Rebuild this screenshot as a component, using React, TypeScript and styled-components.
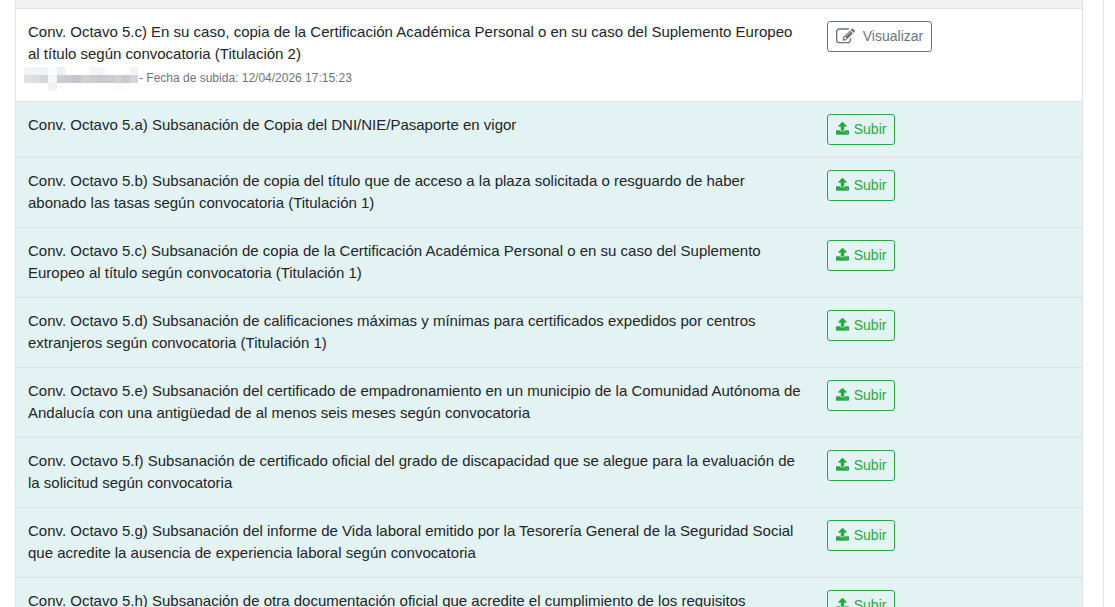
import React from "react";
import styled, { createGlobalStyle } from "styled-components";

const GlobalStyle = createGlobalStyle`
  *, *::before, *::after { box-sizing: border-box; }
  body {
    margin: 0;
    overflow: hidden;
    background: #fff;
    color: #212529;
    font-family: "Liberation Sans", Arial, sans-serif;
    font-size: 15px;
    line-height: 1.5;
  }
`;

const Viewport = styled.main`
  height: 100vh;
  overflow: hidden;
`;

const Panel = styled.section`
  margin-right: 11px;
  padding: 0 20px 0 15px;
  border-right: 1px solid #dee2e6;
`;

const Table = styled.table`
  width: 100%;
  table-layout: fixed;
  border-collapse: collapse;
  border: solid #dee2e6;
  border-width: 0 1px;
`;

const HeadCell = styled.th<{ $width: string }>`
  width: ${(p) => p.$width};
  height: 8px;
  padding: 0;
  background: #f2f2f2;
`;

const Row = styled.tr<{ $pending?: boolean }>`
  background: ${(p) => (p.$pending ? "#e3f3f3" : "#fff")};
`;

const Cell = styled.td`
  padding: 12px;
  border-top: 1px solid #dee2e6;
  vertical-align: top;
`;

const ActionCell = styled(Cell)`
  padding-left: 11px;
`;

const Meta = styled.div`
  display: flex;
  height: 23px;
  color: #6c757d;
  font-size: 12px;
  line-height: 24px;
  white-space: pre;
`;

const Redacted = styled.svg`
  flex: none;
  width: 114px;
  height: 24px;
  margin: 1px 1px 0 -4px;
`;

const Button = styled.button<{ $color: string; $gap: number }>`
  display: flex;
  align-items: center;
  gap: ${(p) => p.$gap}px;
  padding: 4px 8px;
  border: 1px solid ${(p) => p.$color};
  border-radius: 3px;
  background: transparent;
  color: ${(p) => p.$color};
  font-family: inherit;
  font-size: 14px;
  line-height: 21px;
  cursor: pointer;
`;

const Icon = styled.svg<{ $w: number; $h: number }>`
  flex: none;
  width: ${(p) => p.$w}px;
  height: ${(p) => p.$h}px;
  fill: currentColor;
`;

const UploadIcon = () => (
  <Icon $w={13} $h={14} viewBox="64 64 1664 1792" stroke="currentColor" strokeWidth={50} aria-hidden="true">
    <path d="M1344 1472q0-26-19-45t-45-19-45 19-19 45 19 45 45 19 45-19 19-45zm256 0q0-26-19-45t-45-19-45 19-19 45 19 45 45 19 45-19 19-45zm128-224v320q0 40-28 68t-68 28h-1472q-40 0-68-28t-28-68v-320q0-40 28-68t68-28h427q21 56 70.500 92t110.500 36h256q61 0 110.500-36t70.500-92h427q40 0 68 28t28 68zm-325-648q-17 40-59 40h-256v448q0 26-19 45t-45 19h-256q-26 0-45-19t-19-45v-448h-256q-42 0-59-40-17-39 14-69l448-448q18-19 45-19t45 19l448 448q31 30 14 69z" />
  </Icon>
);

const EditIcon = () => (
  <Icon $w={19} $h={19} viewBox="0 0 1792 1792" aria-hidden="true">
    <path d="M888 1184l116-116-152-152-116 116v56h96v96h56zm440-720q-16-16-33 1l-350 350q-17 17-1 33t33-1l350-350q17-17 1-33zm80 594v190q0 119-84.500 203.500t-203.500 84.500h-832q-119 0-203.500-84.500t-84.500-203.500v-832q0-119 84.500-203.500t203.500-84.500h832q63 0 117 25 15 7 18 23 3 17-9 29l-49 49q-14 14-32 8-23-6-45-6h-832q-66 0-113 47t-47 113v832q0 66 47 113t113 47h832q66 0 113-47t47-113v-126q0-13 9-22l64-64q15-15 35-7t20 29zm-96-738l288 288-672 672h-288v-288zm444 132l-92 92-288-288 92-92q28-28 68-28t68 28l152 152q28 28 28 68t-28 68z" />
  </Icon>
);

// Colours of the pixelated file name, one list per band of 8px blocks.
const mosaic = [
  ["#f3f3f4", "#f1f2f3", "#f1f2f3", "#fafcff", "#eeeff1", "#fff", "#fff", "#fff", "#f5f5f6", "#f4f4f6", "#fff", "#fff", "#fefefe", "#f2f3f5"],
  ["#dfe0e0", "#dcddde", "#d6d7da", "#f2f7fc", "#caced1", "#c8cbcd", "#c1c6ce", "#cfd1d3", "#cacccd", "#c6cacd", "#c9cbcd", "#cdd0d8", "#c6cacf", "#cfd4dd"],
  ["#fff", "#fff", "#fff", "#f1f1f3", "#fcfcfd", "#fff", "#fff", "#fff", "#fff", "#fff", "#fff", "#fafafc", "#fdfdfd", "#fff"],
];

const FileName = () => (
  <Redacted viewBox="0 0 112 24" preserveAspectRatio="none" shapeRendering="crispEdges" aria-hidden="true">
    {mosaic.map((band, y) =>
      band.map((fill, x) => (
        <rect key={`${x}-${y}`} x={x * 8} y={y * 8} width={8} height={8} fill={fill} />
      ))
    )}
  </Redacted>
);

const pending = [
  "Conv. Octavo 5.a) Subsanación de Copia del DNI/NIE/Pasaporte en vigor",
  "Conv. Octavo 5.b) Subsanación de copia del título que de acceso a la plaza solicitada o resguardo de haber abonado las tasas según convocatoria (Titulación 1)",
  "Conv. Octavo 5.c) Subsanación de copia de la Certificación Académica Personal o en su caso del Suplemento Europeo al título según convocatoria (Titulación 1)",
  "Conv. Octavo 5.d) Subsanación de calificaciones máximas y mínimas para certificados expedidos por centros extranjeros según convocatoria (Titulación 1)",
  "Conv. Octavo 5.e) Subsanación del certificado de empadronamiento en un municipio de la Comunidad Autónoma de Andalucía con una antigüedad de al menos seis meses según convocatoria",
  "Conv. Octavo 5.f) Subsanación de certificado oficial del grado de discapacidad que se alegue para la evaluación de la solicitud según convocatoria",
  "Conv. Octavo 5.g) Subsanación del informe de Vida laboral emitido por la Tesorería General de la Seguridad Social que acredite la ausencia de experiencia laboral según convocatoria",
  "Conv. Octavo 5.h) Subsanación de otra documentación oficial que acredite el cumplimiento de los requisitos",
];

export default function App() {
  return (
    <>
      <GlobalStyle />
      <Viewport>
        <Panel>
          <Table>
            <thead>
              <tr>
                <HeadCell $width="75%" scope="col" aria-label="Documento" />
                <HeadCell $width="25%" scope="col" aria-label="Acciones" />
              </tr>
            </thead>
            <tbody>
              <Row>
                <Cell>
                  Conv. Octavo 5.c) En su caso, copia de la Certificación Académica Personal o en su caso del
                  Suplemento Europeo al título según convocatoria (Titulación 2)
                  <Meta>
                    <FileName />
                    <span>- Fecha de subida: 12/04/2026 17:15:23</span>
                  </Meta>
                </Cell>
                <ActionCell>
                  <Button type="button" $color="#6c757d" $gap={8}>
                    <EditIcon />
                    Visualizar
                  </Button>
                </ActionCell>
              </Row>
              {pending.map((name) => (
                <Row key={name} $pending>
                  <Cell>{name}</Cell>
                  <ActionCell>
                    <Button type="button" $color="#28a745" $gap={5}>
                      <UploadIcon />
                      Subir
                    </Button>
                  </ActionCell>
                </Row>
              ))}
            </tbody>
          </Table>
        </Panel>
      </Viewport>
    </>
  );
}
